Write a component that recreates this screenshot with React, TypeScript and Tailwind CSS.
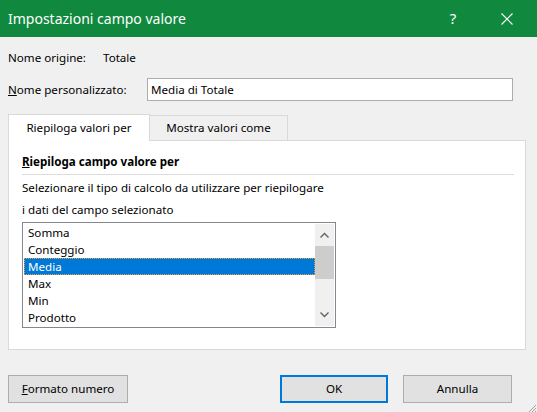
import React from 'react';

const items = ['Somma', 'Conteggio', 'Media', 'Max', 'Min', 'Prodotto'];

function Chevron({ up }: { up?: boolean }) {
  return (
    <svg width="9" height="6" viewBox="0 0 9 6" className="text-[#606060]">
      <path
        d={up ? 'M0.5 5.5 L4.5 1.5 L8.5 5.5' : 'M0.5 0.5 L4.5 4.5 L8.5 0.5'}
        fill="none"
        stroke="currentColor"
        strokeWidth="1.3"
      />
    </svg>
  );
}

export default function App() {
  return (
    <div className="w-[537px] h-[412px] bg-[#f0f0f0] flex flex-col text-[11.6px] text-black font-['Noto_Sans',sans-serif] overflow-hidden">
      {/* title bar */}
      <div className="h-[37px] bg-[#10893e] text-white flex items-center pl-2 shrink-0">
        <div className="text-[14px] flex-1 leading-none">Impostazioni campo valore</div>
        <div className="text-[15px] w-[20px] text-center mr-[38px] leading-none">?</div>
        <svg width="12" height="12" viewBox="0 0 12 12" className="mr-[24px]">
          <path d="M0.5 0.5 L11.5 11.5 M11.5 0.5 L0.5 11.5" stroke="white" strokeWidth="1.1" />
        </svg>
      </div>

      <div className="flex flex-col px-2 flex-1">
        <div className="flex items-center h-[20px] mt-[11px]">
          <span className="w-[95px]">Nome origine:</span>
          <span>Totale</span>
        </div>
        <div className="flex items-center mt-[10px] h-[23px]">
          <span className="w-[139px]">
            <span className="underline">N</span>ome personalizzato:
          </span>
          <div className="flex-1 h-[23px] mr-[16px] bg-white border border-[#adadad] flex items-center px-[3px]">
            Media di Totale
          </div>
        </div>

        {/* tabs */}
        <div className="flex items-end mt-[12px] h-[27px] mr-[3px]">
          <div className="h-[27px] w-[142px] bg-white border border-b-0 border-[#d9d9d9] flex items-center justify-center relative z-10 -mb-px pb-px">
            Riepiloga valori per
          </div>
          <div className="h-[25px] w-[138px] bg-[#f0f0f0] border border-l-0 border-b-0 border-[#d9d9d9] flex items-center justify-center">
            Mostra valori come
          </div>
        </div>
        <div className="h-[210px] mr-[3px] bg-white border border-[#d9d9d9] flex flex-col pl-[13px] pr-[11px]">
          <div className="font-bold h-[20px] flex items-center mt-[11px]">
            <span className="underline">R</span>iepiloga campo valore per
          </div>
          <div className="h-px bg-[#dcdcdc] mt-[2px]" />
          <div className="h-[22px] flex items-center mt-[2px]">
            Selezionare il tipo di calcolo da utilizzare per riepilogare
          </div>
          <div className="h-[22px] flex items-center">i dati del campo selezionato</div>
          <div className="w-[314px] h-[106px] border border-[#828790] flex mt-px">
            <div className="flex-1 pt-px pl-px">
              {items.map((it) => (
                <div
                  key={it}
                  className={
                    it === 'Media'
                      ? 'h-[17px] flex items-center px-[4px] bg-[#0078d7] text-white outline-1 outline-dotted outline-[#f0a030] -outline-offset-1'
                      : 'h-[17px] flex items-center px-[4px]'
                  }
                >
                  {it}
                </div>
              ))}
            </div>
            <div className="w-[19px] bg-[#f0f0f0] flex flex-col items-center my-px mr-px">
              <div className="h-[22px] flex items-center justify-center">
                <Chevron up />
              </div>
              <div className="w-full h-[33px] bg-[#cdcdcd]" />
              <div className="flex-1" />
              <div className="h-[22px] flex items-center justify-center">
                <Chevron />
              </div>
            </div>
          </div>
        </div>

        {/* buttons */}
        <div className="flex items-center mt-[25px]">
          <button className="w-[120px] h-[28px] bg-[#e1e1e1] border border-[#adadad]">
            <span className="underline">F</span>ormato numero
          </button>
          <div className="flex-1" />
          <button className="w-[108px] h-[28px] bg-[#e1e1e1] border-2 border-[#0078d7]">OK</button>
          <button className="w-[109px] h-[28px] bg-[#e1e1e1] border border-[#adadad] ml-[15px] mr-[17px]">
            Annulla
          </button>
        </div>
        <div className="flex-1 flex justify-end items-end">
          <svg width="10" height="10" viewBox="0 0 10 10" className="-mr-2 mb-px">
            <path d="M9 2 L2 9 M9 5 L5 9 M9 8 L8 9" stroke="#a0a0a0" strokeWidth="1" />
          </svg>
        </div>
      </div>
    </div>
  );
}
